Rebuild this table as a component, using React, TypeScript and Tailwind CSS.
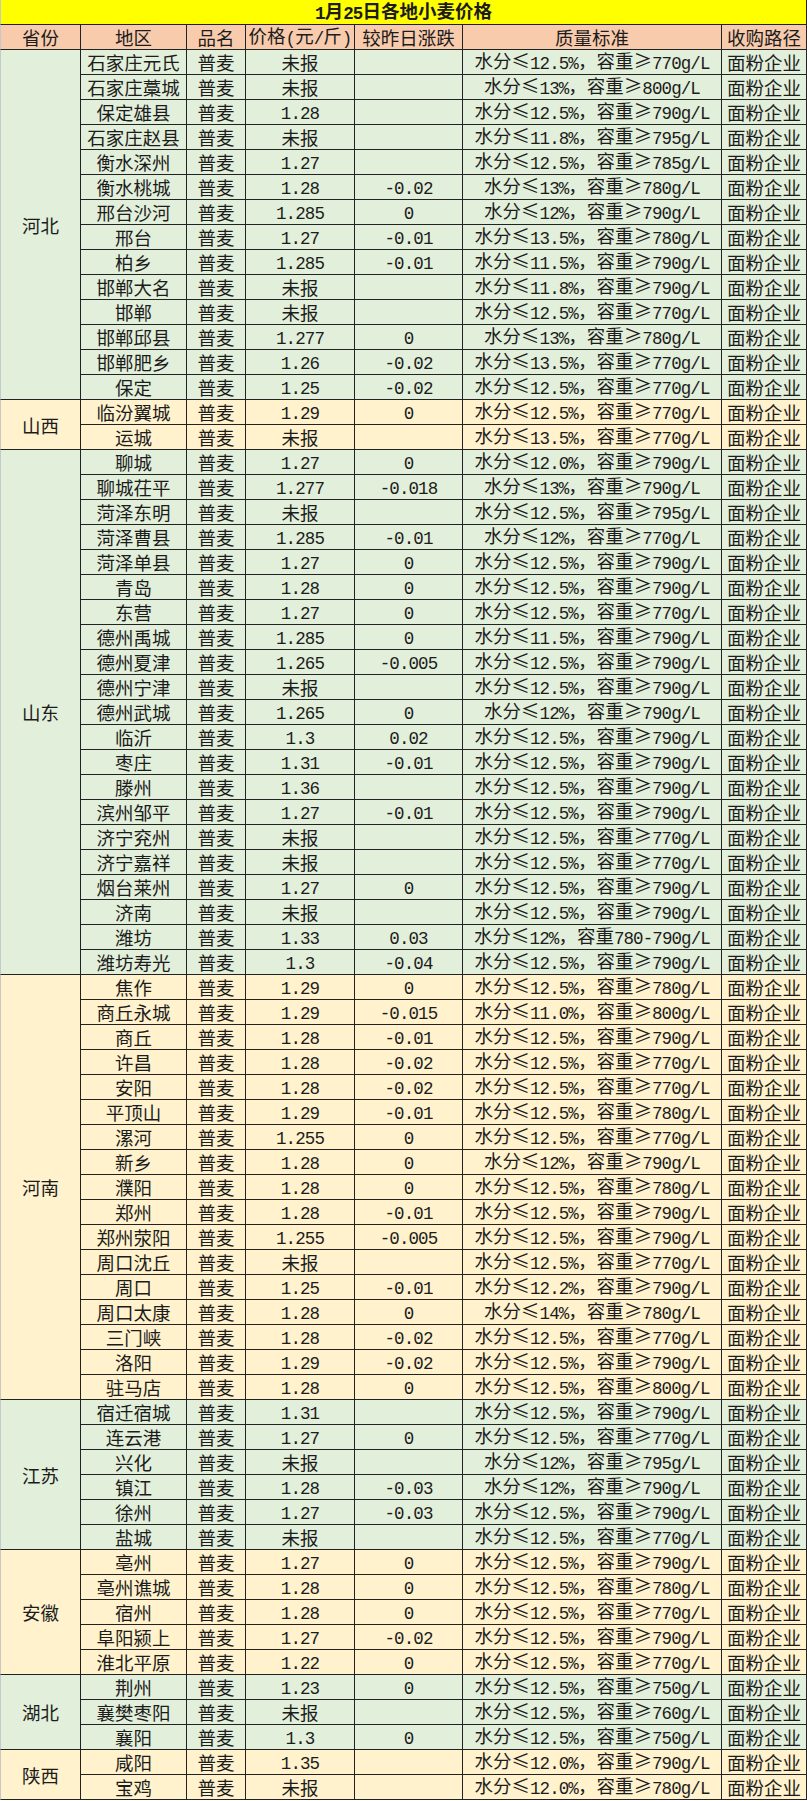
import React from "react";

type Row = [string, string, string, string];

type Group = {
  name: string;
  bg: string;
  span: string;
  rows: Row[];
};

const groups: Group[] = [
  {
    name: "河北",
    bg: "bg-[#e2efda]",
    span: "row-span-14",
    rows: [
      ["石家庄元氏", "未报", "", "水分≤12.5%，容重≥770g/L"],
      ["石家庄藁城", "未报", "", "水分≤13%，容重≥800g/L"],
      ["保定雄县", "1.28", "", "水分≤12.5%，容重≥790g/L"],
      ["石家庄赵县", "未报", "", "水分≤11.8%，容重≥795g/L"],
      ["衡水深州", "1.27", "", "水分≤12.5%，容重≥785g/L"],
      ["衡水桃城", "1.28", "-0.02", "水分≤13%，容重≥780g/L"],
      ["邢台沙河", "1.285", "0", "水分≤12%，容重≥790g/L"],
      ["邢台", "1.27", "-0.01", "水分≤13.5%，容重≥780g/L"],
      ["柏乡", "1.285", "-0.01", "水分≤11.5%，容重≥790g/L"],
      ["邯郸大名", "未报", "", "水分≤11.8%，容重≥790g/L"],
      ["邯郸", "未报", "", "水分≤12.5%，容重≥770g/L"],
      ["邯郸邱县", "1.277", "0", "水分≤13%，容重≥780g/L"],
      ["邯郸肥乡", "1.26", "-0.02", "水分≤13.5%，容重≥770g/L"],
      ["保定", "1.25", "-0.02", "水分≤12.5%，容重≥770g/L"],
    ],
  },
  {
    name: "山西",
    bg: "bg-[#fff2cc]",
    span: "row-span-2",
    rows: [
      ["临汾翼城", "1.29", "0", "水分≤12.5%，容重≥770g/L"],
      ["运城", "未报", "", "水分≤13.5%，容重≥770g/L"],
    ],
  },
  {
    name: "山东",
    bg: "bg-[#e2efda]",
    span: "row-span-21",
    rows: [
      ["聊城", "1.27", "0", "水分≤12.0%，容重≥790g/L"],
      ["聊城茌平", "1.277", "-0.018", "水分≤13%，容重≥790g/L"],
      ["菏泽东明", "未报", "", "水分≤12.5%，容重≥795g/L"],
      ["菏泽曹县", "1.285", "-0.01", "水分≤12%，容重≥770g/L"],
      ["菏泽单县", "1.27", "0", "水分≤12.5%，容重≥790g/L"],
      ["青岛", "1.28", "0", "水分≤12.5%，容重≥790g/L"],
      ["东营", "1.27", "0", "水分≤12.5%，容重≥770g/L"],
      ["德州禹城", "1.285", "0", "水分≤11.5%，容重≥790g/L"],
      ["德州夏津", "1.265", "-0.005", "水分≤12.5%，容重≥790g/L"],
      ["德州宁津", "未报", "", "水分≤12.5%，容重≥790g/L"],
      ["德州武城", "1.265", "0", "水分≤12%，容重≥790g/L"],
      ["临沂", "1.3", "0.02", "水分≤12.5%，容重≥790g/L"],
      ["枣庄", "1.31", "-0.01", "水分≤12.5%，容重≥790g/L"],
      ["滕州", "1.36", "", "水分≤12.5%，容重≥790g/L"],
      ["滨州邹平", "1.27", "-0.01", "水分≤12.5%，容重≥790g/L"],
      ["济宁兖州", "未报", "", "水分≤12.5%，容重≥770g/L"],
      ["济宁嘉祥", "未报", "", "水分≤12.5%，容重≥770g/L"],
      ["烟台莱州", "1.27", "0", "水分≤12.5%，容重≥790g/L"],
      ["济南", "未报", "", "水分≤12.5%，容重≥790g/L"],
      ["潍坊", "1.33", "0.03", "水分≤12%，容重780-790g/L"],
      ["潍坊寿光", "1.3", "-0.04", "水分≤12.5%，容重≥790g/L"],
    ],
  },
  {
    name: "河南",
    bg: "bg-[#fff2cc]",
    span: "row-span-17",
    rows: [
      ["焦作", "1.29", "0", "水分≤12.5%，容重≥780g/L"],
      ["商丘永城", "1.29", "-0.015", "水分≤11.0%，容重≥800g/L"],
      ["商丘", "1.28", "-0.01", "水分≤12.5%，容重≥790g/L"],
      ["许昌", "1.28", "-0.02", "水分≤12.5%，容重≥770g/L"],
      ["安阳", "1.28", "-0.02", "水分≤12.5%，容重≥770g/L"],
      ["平顶山", "1.29", "-0.01", "水分≤12.5%，容重≥780g/L"],
      ["漯河", "1.255", "0", "水分≤12.5%，容重≥770g/L"],
      ["新乡", "1.28", "0", "水分≤12%，容重≥790g/L"],
      ["濮阳", "1.28", "0", "水分≤12.5%，容重≥780g/L"],
      ["郑州", "1.28", "-0.01", "水分≤12.5%，容重≥790g/L"],
      ["郑州荥阳", "1.255", "-0.005", "水分≤12.5%，容重≥790g/L"],
      ["周口沈丘", "未报", "", "水分≤12.5%，容重≥770g/L"],
      ["周口", "1.25", "-0.01", "水分≤12.2%，容重≥790g/L"],
      ["周口太康", "1.28", "0", "水分≤14%，容重≥780g/L"],
      ["三门峡", "1.28", "-0.02", "水分≤12.5%，容重≥770g/L"],
      ["洛阳", "1.29", "-0.02", "水分≤12.5%，容重≥790g/L"],
      ["驻马店", "1.28", "0", "水分≤12.5%，容重≥800g/L"],
    ],
  },
  {
    name: "江苏",
    bg: "bg-[#e2efda]",
    span: "row-span-6",
    rows: [
      ["宿迁宿城", "1.31", "", "水分≤12.5%，容重≥790g/L"],
      ["连云港", "1.27", "0", "水分≤12.5%，容重≥770g/L"],
      ["兴化", "未报", "", "水分≤12%，容重≥795g/L"],
      ["镇江", "1.28", "-0.03", "水分≤12%，容重≥790g/L"],
      ["徐州", "1.27", "-0.03", "水分≤12.5%，容重≥790g/L"],
      ["盐城", "未报", "", "水分≤12.5%，容重≥770g/L"],
    ],
  },
  {
    name: "安徽",
    bg: "bg-[#fff2cc]",
    span: "row-span-5",
    rows: [
      ["亳州", "1.27", "0", "水分≤12.5%，容重≥790g/L"],
      ["亳州谯城", "1.28", "0", "水分≤12.5%，容重≥780g/L"],
      ["宿州", "1.28", "0", "水分≤12.5%，容重≥770g/L"],
      ["阜阳颍上", "1.27", "-0.02", "水分≤12.5%，容重≥790g/L"],
      ["淮北平原", "1.22", "0", "水分≤12.5%，容重≥770g/L"],
    ],
  },
  {
    name: "湖北",
    bg: "bg-[#e2efda]",
    span: "row-span-3",
    rows: [
      ["荆州", "1.23", "0", "水分≤12.5%，容重≥750g/L"],
      ["襄樊枣阳", "未报", "", "水分≤12.5%，容重≥760g/L"],
      ["襄阳", "1.3", "0", "水分≤12.5%，容重≥750g/L"],
    ],
  },
  {
    name: "陕西",
    bg: "bg-[#fff2cc]",
    span: "row-span-2",
    rows: [
      ["咸阳", "1.35", "", "水分≤12.0%，容重≥790g/L"],
      ["宝鸡", "未报", "", "水分≤12.0%，容重≥780g/L"],
    ],
  },
];

function Txt({ s }: { s: string }) {
  const parts = s.split(/([\x21-\x7e]+)/);
  return (
    <span className="whitespace-nowrap leading-[22px]">
      {parts.map((p, i) =>
        /^[\x21-\x7e]+$/.test(p) ? (
          <span
            key={i}
            className="font-['Liberation_Mono','Noto_Sans_CJK_SC',monospace] text-[17.5px] tracking-[-0.9px] align-[-1px]"
          >
            {p}
          </span>
        ) : (
          <React.Fragment key={i}>{p}</React.Fragment>
        )
      )}
    </span>
  );
}

const cell =
  "flex items-center justify-center whitespace-nowrap border-r border-b border-[#222] leading-[22px]";

export default function App() {
  return (
    <div className="w-[807px] bg-white font-['Noto_Sans_CJK_SC',sans-serif] text-[18.5px] text-[#1c1c1c]">
      <div className="grid grid-cols-[81px_106px_59px_109px_108px_259px_85px] auto-rows-[25px]">
        <div
          className={`${cell} col-span-7 bg-[#ffff00] font-bold border-l border-l-[#c8c8c8]`}
        >
          <Txt s="1月25日各地小麦价格" />
        </div>
        {["省份", "地区", "品名", "价格(元/斤)", "较昨日涨跌", "质量标准", "收购路径"].map(
          (h, i) => (
            <div
              key={h}
              className={`${cell} bg-[#f8cbad] ${i === 0 ? "border-l border-l-[#c8c8c8]" : ""}`}
            >
              <Txt s={h} />
            </div>
          )
        )}
        {groups.map((g) => (
          <React.Fragment key={g.name}>
            <div className={`${cell} ${g.span} ${g.bg} border-l border-l-[#c8c8c8]`}>
              <span className="leading-[22px]">{g.name}</span>
            </div>
            {g.rows.map((r, ri) => (
              <React.Fragment key={ri}>
                <div className={`${cell} ${g.bg}`}>
                  <Txt s={r[0]} />
                </div>
                <div className={`${cell} ${g.bg}`}>
                  <span className="leading-[22px]">普麦</span>
                </div>
                <div className={`${cell} ${g.bg}`}>
                  <Txt s={r[1]} />
                </div>
                <div className={`${cell} ${g.bg}`}>
                  <Txt s={r[2]} />
                </div>
                <div className={`${cell} ${g.bg}`}>
                  <Txt s={r[3]} />
                </div>
                <div className={`${cell} ${g.bg}`}>
                  <span className="leading-[22px]">面粉企业</span>
                </div>
              </React.Fragment>
            ))}
          </React.Fragment>
        ))}
      </div>
    </div>
  );
}
